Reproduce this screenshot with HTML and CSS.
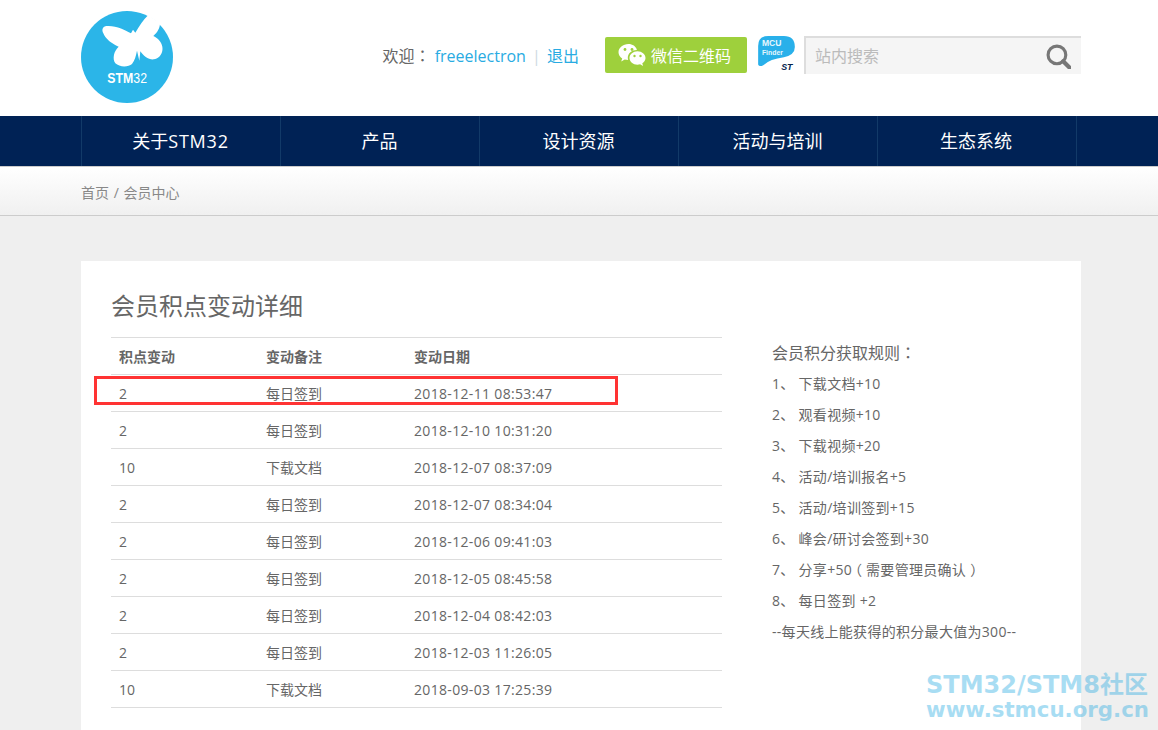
FILE: index.html
```html
<!DOCTYPE html>
<html lang="en">
<head>
    <meta charset="UTF-8">
    <meta name="viewport" content="width=device-width, initial-scale=1.0">
    <title>会员中心</title>
    <link rel="stylesheet" href="styles.css">
</head>
<body>
    <header class="top">
        <div class="wrap top-inner">
            <svg class="logo" viewBox="63 33 276 276" overflow="visible">
                <circle cx="201" cy="171" r="138" fill="#2bb5e8"/>
                <path fill="#fff" d="M140 78 C128 80 124 88 130 100 C136 116 155 132 176 140 C162 152 156 176 166 190 C178 202 205 202 216 192 C224 182 228 168 231 152 L238 182 L241 154 C250 168 266 180 282 178 C300 174 310 158 307 140 C304 124 292 114 280 108 C292 98 300 84 300 70 L265 45 C250 58 238 78 226 98 L219 89 L213 100 C196 90 168 76 140 78 Z"/>
                <g transform="translate(142 250) scale(.84 1)">
                    <text class="logo-text">STM<tspan class="logo-thin">32</tspan></text>
                </g>
            </svg>
            <div class="top-right">
                <div class="welcome">欢迎<span class="tc">：</span> <a href="#">freeelectron</a> <span class="sep">|</span> <a href="#">退出</a></div>
                <a class="wechat" href="#">
                    <svg class="wechat-icon" viewBox="0 0 28 24">
                        <path fill="#fff" d="M10.5 1C4.9 1 .5 4.7 .5 9.2c0 2.6 1.4 4.8 3.7 6.3L3.2 18.500l3.500-1.900c1.100.3 2.300.5 3.500.5-.3-.9-.4-1.700-.4-2.500 0-4.300 4-7.700 9.100-7.700C17.900 3.300 14.500 1 10.500 1Z"/>
                        <path fill="#fff" d="M19.500 8.300c-4.400 0-8 3-8 6.700s3.600 6.700 8 6.700c.9 0 1.800-.1 2.600-.4l3 1.700-.8-2.700c1.900-1.200 3.200-3.200 3.200-5.300 0-3.700-3.600-6.700-8-6.700Z"/>
                        <circle cx="7" cy="6.500" r="1.400" fill="#9ed03c"/>
                        <circle cx="14" cy="6.500" r="1.400" fill="#9ed03c"/>
                        <circle cx="16.500" cy="13" r="1.200" fill="#9ed03c"/>
                        <circle cx="22.500" cy="13" r="1.200" fill="#9ed03c"/>
                    </svg>
                    <span>微信二维码</span>
                </a>
                <svg class="mcu" viewBox="25 33 107 102">
                    <path fill="#29b0ea" d="M25 62 Q25 33 55 33 L100 33 Q132 33 132 65 Q132 88 100 95 Q60 100 40 118 Q28 124 25 116 Z"/>
                    <text x="36" y="62" class="mcu-big">MCU</text>
                    <text x="36" y="88" class="mcu-small">Finder</text>
                    <text x="92" y="132" class="mcu-st">ST</text>
                </svg>
                <form class="search">
                    <input type="text" placeholder="站内搜索">
                    <svg class="search-icon" viewBox="0 0 24 24">
                        <circle cx="10.500" cy="10.500" r="8.500" fill="none" stroke="#777" stroke-width="3"/>
                        <path d="M16.500 16.500 L22.500 22.500" stroke="#777" stroke-width="4" stroke-linecap="round"/>
                    </svg>
                </form>
            </div>
        </div>
    </header>

    <nav class="nav">
        <div class="wrap nav-list">
            <a href="#">关于<span class="latin">STM32</span></a>
            <a href="#">产品</a>
            <a href="#">设计资源</a>
            <a href="#">活动与培训</a>
            <a href="#">生态系统</a>
        </div>
    </nav>

    <div class="crumbs">
        <div class="wrap">首页 / 会员中心</div>
    </div>

    <div class="wrap card">
        <div class="points">
            <h2>会员积点变动详细</h2>
            <table>
                <thead>
                    <tr><th>积点变动</th><th>变动备注</th><th>变动日期</th></tr>
                </thead>
                <tbody>
                    <tr><td>2</td><td>每日签到</td><td>2018-12-11 08:53:47</td></tr>
                    <tr><td>2</td><td>每日签到</td><td>2018-12-10 10:31:20</td></tr>
                    <tr><td>10</td><td>下载文档</td><td>2018-12-07 08:37:09</td></tr>
                    <tr><td>2</td><td>每日签到</td><td>2018-12-07 08:34:04</td></tr>
                    <tr><td>2</td><td>每日签到</td><td>2018-12-06 09:41:03</td></tr>
                    <tr><td>2</td><td>每日签到</td><td>2018-12-05 08:45:58</td></tr>
                    <tr><td>2</td><td>每日签到</td><td>2018-12-04 08:42:03</td></tr>
                    <tr><td>2</td><td>每日签到</td><td>2018-12-03 11:26:05</td></tr>
                    <tr><td>10</td><td>下载文档</td><td>2018-09-03 17:25:39</td></tr>
                </tbody>
            </table>
        </div>
        <div class="rules">
            <h3>会员积分获取规则<span class="tc">：</span></h3>
            <p>1、 下载文档+10</p>
            <p>2、 观看视频+10</p>
            <p>3、 下载视频+20</p>
            <p>4、 活动/培训报名+5</p>
            <p>5、 活动/培训签到+15</p>
            <p>6、 峰会/研讨会签到+30</p>
            <p>7、 分享+50<span class="paren-l">（</span>需要管理员确认<span class="paren-r">）</span></p>
            <p>8、 每日签到 +2</p>
            <p>--每天线上能获得的积分最大值为300--</p>
        </div>
        <div class="redbox"></div>
    </div>

    <div class="watermark">STM32/STM8社区<br><span>www.stmcu.org.cn</span></div>
</body>
</html>
```

FILE: styles.css
```css
html, body {
    height: 730px;
    overflow: hidden;
}

body {
    font-family: "Open Sans", "Noto Sans CJK SC", sans-serif;
    margin: 0;
    padding: 0;
    background-color: #efefef;
    color: #666;
    position: relative;
}

a {
    text-decoration: none;
    color: #29abe2;
}

.wrap {
    width: 1000px;
    margin-left: 81px;
}

.tc {
    font-family: "Noto Sans CJK TC", sans-serif;
}

.top {
    background-color: #fff;
    height: 116px;
}

.top-inner {
    display: flex;
    justify-content: space-between;
}

.logo {
    width: 92px;
    height: 92px;
    margin-top: 11px;
}

.logo-text {
    font-family: "Liberation Sans", sans-serif;
    font-size: 44px;
    font-weight: bold;
    fill: #fff;
}

.logo-thin {
    font-weight: normal;
}

.top-right {
    display: flex;
    align-items: flex-start;
    padding-top: 36px;
}

.welcome {
    font-size: 16px;
    height: 38px;
    line-height: 38px;
    margin-right: 26px;
}

.sep {
    color: #cdd9e2;
    margin: 0 2px;
}

.wechat {
    display: flex;
    align-items: center;
    width: 142px;
    height: 36px;
    margin-top: 1px;
    padding-left: 13px;
    box-sizing: border-box;
    background-color: #9ed03c;
    border-radius: 2px;
    color: #fff;
    font-size: 16px;
}

.wechat-icon {
    width: 28px;
    height: 24px;
    margin-right: 5px;
}

.mcu {
    width: 37px;
    height: 35px;
    margin-left: 11px;
}

.mcu-big, .mcu-small, .mcu-st {
    font-family: "Liberation Sans", sans-serif;
    font-weight: bold;
}

.mcu-big {
    font-size: 25px;
    fill: #e6f6fd;
}

.mcu-small {
    font-size: 20px;
    fill: #e6f6fd;
}

.mcu-st {
    font-size: 26px;
    font-style: italic;
    fill: #03234b;
}

.search {
    display: flex;
    align-items: center;
    width: 277px;
    height: 38px;
    margin: 0 0 0 9px;
    box-sizing: border-box;
    background-color: #f5f5f5;
    border-top: 2px solid #ddd;
    border-left: 2px solid #ddd;
}

.search input {
    flex: 1;
    min-width: 0;
    border: 0;
    outline: 0;
    background: none;
    padding: 0 0 0 9px;
    font-family: inherit;
    font-size: 16px;
    color: #666;
}

.search input::placeholder {
    color: #bbb;
}

.search-icon {
    width: 25px;
    height: 25px;
    margin-right: 10px;
}

.nav {
    background-color: #002255;
    height: 50px;
}

.nav-list {
    display: flex;
}

.nav-list a {
    width: 199px;
    height: 50px;
    padding-right: 1px;
    border-left: 1px solid #123a68;
    box-sizing: border-box;
    color: #fff;
    font-size: 18px;
    line-height: 50px;
    text-align: center;
}

.nav-list a:last-child {
    width: 200px;
    padding-right: 2px;
    border-right: 1px solid #123a68;
}

.latin {
    letter-spacing: 0.8px;
}

.crumbs {
    height: 50px;
    box-sizing: border-box;
    background: linear-gradient(#fff, #f0f0f0);
    border-top: 1px solid #ccc;
    border-bottom: 1px solid #ccc;
    font-size: 14px;
    line-height: 52px;
    word-spacing: 1px;
    color: #888;
}

.card {
    position: relative;
    display: flex;
    margin-top: 45px;
    padding: 30px;
    box-sizing: border-box;
    background-color: #fff;
}

.points {
    width: 611px;
}

.points h2 {
    margin: 0 0 16px;
    font-size: 24px;
    font-weight: normal;
    line-height: 30px;
}

table {
    width: 100%;
    border-collapse: collapse;
    border-top: 1px solid #ddd;
    font-size: 14px;
}

th, td {
    height: 37px;
    padding: 0 0 0 8px;
    box-sizing: border-box;
    border-bottom: 1px solid #ddd;
    text-align: left;
    width: 148px;
}

th:first-child, td:first-child {
    width: 147px;
}

th:last-child, td:last-child {
    width: auto;
}

td:last-child {
    letter-spacing: 0.33px;
}

.rules {
    margin-left: 50px;
    padding-top: 46px;
    font-size: 14px;
}

.rules h3 {
    margin: 0;
    height: 31px;
    font-size: 16px;
    font-weight: normal;
    line-height: 30px;
}

.rules p {
    margin: 0;
    height: 31px;
    line-height: 31px;
    letter-spacing: 0.3px;
}

.paren-l, .paren-r {
    display: inline-block;
    width: 14px;
}

.paren-l {
    text-indent: -4px;
}

.paren-r {
    text-indent: 4px;
}

.redbox {
    position: absolute;
    left: 13px;
    top: 115px;
    width: 524px;
    height: 29px;
    box-sizing: border-box;
    border: 3px solid #f33;
}

.watermark {
    position: absolute;
    left: 926px;
    top: 673px;
    font-family: "DejaVu Sans", "Noto Sans CJK SC", sans-serif;
    font-size: 24px;
    font-weight: bold;
    line-height: 24px;
    color: #29abe2;
    opacity: 0.4;
    white-space: nowrap;
}

.watermark span {
    font-size: 21.300px;
}
```
